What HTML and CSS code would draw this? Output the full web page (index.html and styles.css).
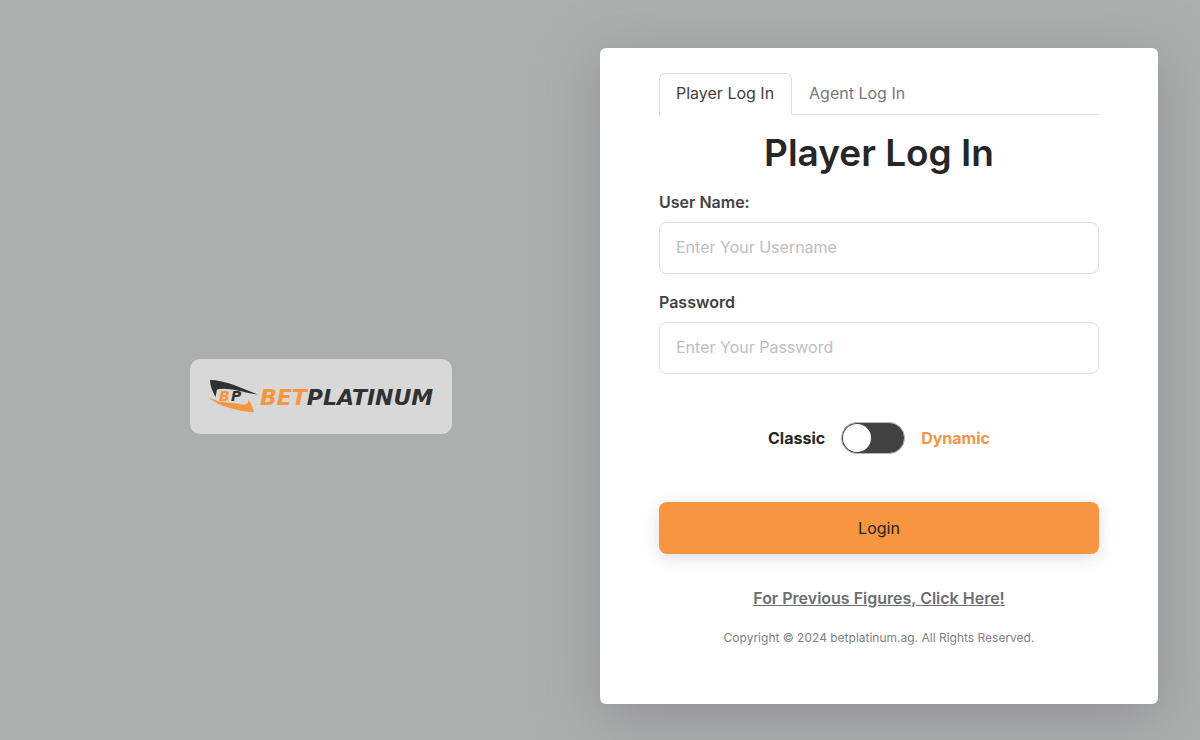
FILE: index.html
```
<!DOCTYPE html>
<html lang="en">
<head>
<meta charset="utf-8">
<meta name="viewport" content="width=device-width, initial-scale=1">
<title>BetPlatinum - Player Log In</title>
<link rel="stylesheet" href="styles.css">
</head>
<body>
<main class="page">
  <section class="brand">
    <div class="logo">
      <svg class="logo-art" viewBox="0 0 230 36" role="img" aria-label="BetPlatinum">
        <path class="ink" d="M4 2C11 2 20 4 28 7L52 16.500C45 16 37 13.500 31 12.500C24 11 16 10 11 11.500L9.500 19C7 14 4 8 4 2Z"/>
        <path class="accent" d="M2 19.500L13 23.500C20 24.500 29 25 36 26.500C41 27.500 43 25 42 21C45 25 47 30 48 34C40 34 30 32 21 29C16 27.500 12 26 10 24.500Z"/>
        <text class="mark accent" x="13" y="23">B</text>
        <text class="mark ink" x="25" y="23">P</text>
        <text class="word" x="54" y="27"><tspan class="accent">BET</tspan><tspan class="ink">PLATINUM</tspan></text>
      </svg>
    </div>
  </section>
  <section class="card">
    <div class="card-body">
      <nav class="tabs">
        <a class="tab active" href="#player" aria-current="page">Player Log In</a>
        <a class="tab" href="#agent">Agent Log In</a>
      </nav>
      <h1 class="title">Player Log In</h1>
      <form class="form">
        <label class="label" for="username">User Name:</label>
        <input class="field" id="username" type="text" placeholder="Enter Your Username">
        <label class="label" for="password">Password</label>
        <input class="field" id="password" type="password" placeholder="Enter Your Password">
        <div class="mode">
          <label for="mode">Classic</label>
          <input class="switch" id="mode" type="checkbox" role="switch">
          <label class="dynamic" for="mode">Dynamic</label>
        </div>
        <button class="login" type="submit">Login</button>
      </form>
      <a class="previous" href="#previous">For Previous Figures, Click Here!</a>
      <p class="copyright">Copyright © 2024 betplatinum.ag. All Rights Reserved.</p>
    </div>
  </section>
</main>
</body>
</html>
```

FILE: styles.css
```
* {
  box-sizing: border-box;
}

body {
  margin: 0;
  background: #acafad;
  color: #262626;
  font-family: Inter, "Open Sans", sans-serif;
  font-size: 16px;
  line-height: 24px;
}

.page {
  display: grid;
  grid-template-columns: 1fr 1fr;
  min-height: 100vh;
  padding: 48px 42px 36px;
}

.brand {
  display: flex;
  align-items: center;
  justify-content: center;
  padding-top: 41px;
}

.logo {
  padding: 19px 16px 20px;
  border-radius: 10px;
  background: #d8d8d8;
}

.logo-art {
  display: block;
  width: 230px;
  height: 36px;
}

.ink {
  fill: #303132;
}

.accent {
  fill: #f79540;
}

.mark,
.word {
  font-family: "DejaVu Sans", sans-serif;
  font-weight: 700;
  font-style: italic;
}

.mark {
  font-size: 14px;
}

.word {
  font-size: 22px;
}

.card {
  padding: 25px 24px 48px;
  border-radius: 6px;
  background: #fff;
  box-shadow: 0 12px 56px rgba(128, 124, 134, 0.6);
}

.card-body {
  display: flex;
  flex-direction: column;
  max-width: 440px;
  margin: 0 auto;
}

.tabs {
  display: flex;
  border-bottom: 1px solid #dedfe0;
}

.tab {
  margin-bottom: -1px;
  padding: 7px 17px 9px 16px;
  border: 1px solid transparent;
  border-bottom: 0;
  border-radius: 6px 6px 0 0;
  color: #777;
  line-height: 25px;
  text-decoration: none;
}

.tab.active {
  border-color: #dedfe0;
  background: #fff;
  color: #404042;
}

.title {
  margin: 16px 0;
  font-size: 37px;
  font-weight: 600;
  line-height: 43px;
  text-align: center;
}

.form {
  display: flex;
  flex-direction: column;
}

.label {
  margin-bottom: 8px;
  color: #424245;
  font-weight: 600;
}

.field {
  width: 100%;
  height: 52px;
  margin-bottom: 16px;
  padding: 0 16px 2px;
  border: 1px solid #dedfe0;
  border-radius: 8px;
  background: #fff;
  color: #424245;
  font: inherit;
}

.field::placeholder {
  color: #bdbebf;
  opacity: 1;
}

.mode {
  display: flex;
  align-items: center;
  justify-content: center;
  gap: 16px;
  margin: 32px 0 48px;
  font-weight: 700;
}

.dynamic {
  color: #f0964a;
}

.switch {
  display: flex;
  align-items: center;
  appearance: none;
  width: 64px;
  height: 32px;
  margin: 0;
  padding: 0 1px;
  border: 1px solid #b5b5b5;
  border-radius: 16px;
  background: #424243;
}

.switch::before {
  content: "";
  width: 28px;
  height: 28px;
  border-radius: 50%;
  background: #fff;
}

.switch:checked {
  justify-content: flex-end;
}

.login {
  height: 52px;
  border: 0;
  border-radius: 8px;
  background: #f79540;
  box-shadow: 0 4px 16px rgba(38, 43, 67, 0.15);
  color: #26211d;
  font: inherit;
}

.previous {
  align-self: center;
  margin-top: 32px;
  color: #6d6e72;
  font-weight: 600;
}

.copyright {
  margin: 16px 0 0;
  color: #808183;
  font-size: 12px;
  text-align: center;
}
```
